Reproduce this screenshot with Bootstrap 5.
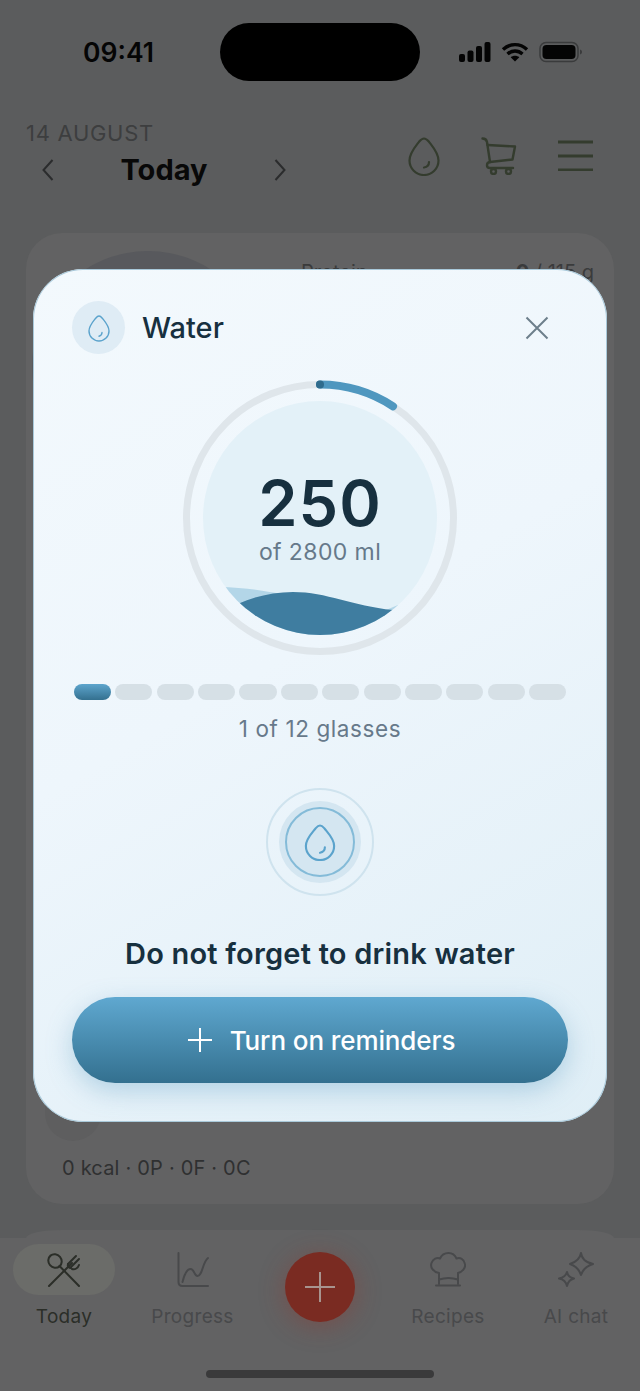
<!DOCTYPE html>
<html lang="en">
<head>
  <meta charset="UTF-8" />
  <meta name="viewport" content="width=device-width, initial-scale=1.0" />
  <title>Water</title>
  <link href="https://cdn.jsdelivr.net/npm/bootstrap@5.3.3/dist/css/bootstrap.min.css" rel="stylesheet">
  <style>
    body { margin: 0; background: #5c5d5e; font-family: Inter, "Liberation Sans", sans-serif; }
    .phone { width: 640px; height: 1391px; overflow: hidden; background: #5b5c5d; }
    .status-row { height: 105px; padding: 23px 57px 0 83px; }
    .clock { font-size: 26.5px; font-weight: 600; color: #050505; width: 137px; line-height: 58px; }
    .island { width: 200px; height: 58px; background: #000; border-radius: 29px; }
    .status-icons { margin-left: 39px; gap: 10px; height: 58px; }
    .head-row { height: 128px; padding: 0 46px 0 26px; }
    .date-label { font-size: 22px; color: #3d3e3f; line-height: 26px; letter-spacing: .7px; margin-top: 15px; }
    .day-row { width: 260px; margin-top: 8px; padding: 0 0 0 16px; }
    .day-name { font-size: 29px; font-weight: 700; color: #080808; line-height: 32px; }
    .head-icons { gap: 41px; margin-top: 32px; }
    .back-card { margin: 0 26px; height: 971px; background: #626263; border-radius: 36px; padding: 18px 20px 24px 36px; }
    .gauge-back { width: 232px; height: 232px; border-radius: 50%; background: #58595d; margin-left: -30px; }
    .macro-row { font-size: 20px; color: #3a3b3c; width: 330px; line-height: 24px; padding-top: 9px; }
    .macro-dot { width: 6px; height: 6px; border-radius: 50%; background: #48494b; margin: 9px 0 0 18px; }
    .macro-name { margin-left: 13px; }
    .meal-blob { width: 56px; height: 40px; border-radius: 0 0 28px 28px; background: #5e5e5f; margin-left: -17px; }
    .kcal-line { font-size: 20px; color: #2f3031; line-height: 24px; letter-spacing: .2px; padding-top: 15px; }
    .next-card { margin: 26px 26px 0; height: 8px; background: #626263; border-radius: 36px 36px 0 0 / 8px 8px 0 0; }
    .tab-bar { height: 153px; background: #626263; padding: 6px 13px 0; }
    .tab-item { width: 102px; font-size: 19px; color: #48494b; line-height: 24px; letter-spacing: .3px; }
    .tab-item.tab-wide { width: 128px; margin-left: 17px; }
    .tab-top { height: 51px; width: 102px; border-radius: 26px; }
    .tab-active .tab-top { background: #6b6c69; }
    .tab-active { color: #2b2e28; }
    .tab-label { margin-top: 10px; }
    .fab-slot { width: 70px; margin: 8px 42px 0 32px; }
    .fab { width: 70px; height: 70px; border-radius: 50%; background: #7a2b22; box-shadow: 0 4px 26px rgba(150,50,40,.4); }
    .item-chat { margin-left: 26px; }
    .home-bar { left: 206px; top: 1370px; width: 228px; height: 8px; border-radius: 4px; background: #3a3a3b; }

    .sheet { position: absolute; left: 33px; top: 269px; width: 574px; height: 853px; border-radius: 50px;
      background: linear-gradient(150deg, #f3f9fd 0%, #eef6fc 45%, #dfeef6 100%); box-shadow: inset 0 0 0 1px #a9c9da; padding: 32px 39px 0; }
    .sheet-head { height: 53px; }
    .drop-badge { width: 53px; height: 53px; border-radius: 50%; background: #dfecf5; }
    .sheet-title { font-size: 29px; font-weight: 500; color: #17303f; margin-left: 17px; line-height: 53px; }
    .close-btn { margin-right: 19px; }
    .ring-box { position: relative; width: 276px; height: 276px; margin: 26px auto 0; }
    .ring-text { position: absolute; inset: 0; text-align: center; padding-top: 88px; }
    .ring-num { font-size: 63px; font-weight: 600; color: #17303f; line-height: 71px; letter-spacing: 1px; }
    .ring-sub { font-size: 23px; color: #66798a; line-height: 26px; letter-spacing: .4px; }
    .glass-row { gap: 4.3px; margin: 28px 2px 0; }
    .glass { flex: 1; height: 16px; border-radius: 8px; background: #d6e0e6; }
    .glass.filled { background: linear-gradient(#5da5cd, #34708f); }
    .glass-count { font-size: 22.500px; color: #67798a; text-align: center; line-height: 26px; margin-top: 16px; letter-spacing: .6px; }
    .add-water { width: 108px; height: 108px; margin: 46px auto 0; border-radius: 50%; border: 2px solid #cfe3ee; }
    .add-mid { width: 82px; height: 82px; border-radius: 50%; background: #d4e6f1; }
    .add-inner { width: 70px; height: 70px; border-radius: 50%; border: 2.500px solid #84bbd8; }
    .nudge { font-size: 29px; font-weight: 600; color: #17303f; text-align: center; line-height: 34px; margin-top: 41px; letter-spacing: .2px; }
    .remind-btn { width: 100%; height: 86px; border: 0; border-radius: 43px; margin-top: 26px; color: #fff; font-size: 26px; font-weight: 500;
      background: linear-gradient(#5fa8d0, #33708f); box-shadow: 0 8px 26px rgba(80,150,190,.35); gap: 18px; letter-spacing: -.1px; padding-left: 15px; }
    .remind-btn:hover { color: #fff; background: linear-gradient(#5fa8d0, #33708f); }
    svg { display: block; }
  </style>
</head>
<body>
<div class="phone position-relative">

  <div class="status-row d-flex">
    <div class="clock">09:41</div>
    <div class="island"></div>
    <div class="status-icons d-flex align-items-center">
      <svg width="32" height="20" viewBox="0 0 32 20" fill="#040404"><rect x="0" y="12" width="6" height="8" rx="2"/><rect x="8.500" y="8.500" width="6" height="11.500" rx="2"/><rect x="17" y="4" width="6" height="16" rx="2"/><rect x="25.500" y="0" width="6" height="20" rx="2"/></svg>
      <svg width="28" height="20" viewBox="0 0 28 20" fill="none" stroke="#040404" stroke-width="3.400"><path d="M2 7.500C9 1 19 1 26 7.500"/><path d="M6.500 12C11 8 17 8 21.500 12"/><path d="M14 19.500l-4.300-4.300c2.400-2 6.200-2 8.600 0z" fill="#040404" stroke="none"/></svg>
      <svg width="44" height="22" viewBox="0 0 44 22"><rect x="1" y="1.500" width="38" height="19" rx="6" fill="none" stroke="#3a3b3c" stroke-width="1.500"/><rect x="3.500" y="4" width="33" height="14" rx="4" fill="#040404"/><path d="M41 8.500c1.500.4 2 1.400 2 2.500s-.5 2.100-2 2.500z" fill="#3a3b3c"/></svg>
    </div>
  </div>

  <div class="head-row d-flex justify-content-between">
    <div>
      <div class="date-label">14 AUGUST</div>
      <div class="day-row d-flex justify-content-between align-items-center">
        <svg width="12" height="24" viewBox="0 0 12 24" fill="none" stroke="#2b2c2d" stroke-width="2"><path d="M10.500 2L1.500 12l9 10"/></svg>
        <div class="day-name">Today</div>
        <svg width="12" height="24" viewBox="0 0 12 24" fill="none" stroke="#2b2c2d" stroke-width="2"><path d="M1.500 2l9 10-9 10"/></svg>
      </div>
    </div>
    <div class="head-icons d-flex align-items-start">
      <svg width="32" height="39" viewBox="0 0 32 39" fill="none" stroke="#343c2e" stroke-width="2.200" stroke-linecap="round"><path d="M16 1.500c2 0 3.500 1.500 5 3.300C25 10 30.500 16 30.500 23.500a14.500 14.500 0 0 1-29 0C1.500 16 7 10 11 4.800 12.500 3 14 1.500 16 1.500z"/><path d="M21 25c0 3-2 5-5 5.500"/></svg>
      <svg width="36" height="38" viewBox="0 0 36 38" fill="none" stroke="#343c2e" stroke-width="2.400" stroke-linecap="round" stroke-linejoin="round"><path d="M1.500 1.500c3 0 4 1 4.500 3.500l3 20"/><path d="M6.500 8l27.500 1.500-2.500 13-22.500 2.500"/><path d="M9 25c-4 .5-4 6 0 6h23"/><circle cx="12.500" cy="34.500" r="2.500"/><circle cx="27.500" cy="34.500" r="2.500"/></svg>
      <svg width="36" height="34" viewBox="0 0 36 34" fill="none" stroke="#343c2e" stroke-width="3"><path d="M0 5h35M0 19h35M0 33h35"/></svg>
    </div>
  </div>

  <div class="back-card d-flex flex-column justify-content-between">
    <div class="d-flex justify-content-between">
      <div class="gauge-back"></div>
      <div class="macro-row d-flex">
        <span class="macro-dot"></span>
        <span class="macro-name">Protein</span>
        <span class="ms-auto"><b>0</b> / 115 g</span>
      </div>
    </div>
    <div>
      <div class="meal-blob"></div>
      <div class="kcal-line">0 kcal · 0P · 0F · 0C</div>
    </div>
  </div>
  <div class="next-card"></div>

  <div class="tab-bar d-flex align-items-start">
    <div class="tab-item tab-active d-flex flex-column align-items-center">
      <div class="tab-top d-flex align-items-center justify-content-center">
        <svg width="36" height="34" viewBox="0 0 36 34" fill="none" stroke="#2b2e28" stroke-width="2" stroke-linecap="round"><ellipse cx="9" cy="8" rx="6.500" ry="7" transform="rotate(-40 9 8)"/><path d="M13.500 13L33 33"/><path d="M3 33L26 10"/><path d="M22 11l8-8M25 14l8-8M26 16c3 1 6-1 7-4"/><path d="M22 11c-1 2 1 4 3 4"/></svg>
      </div>
      <div class="tab-label">Today</div>
    </div>
    <div class="tab-item tab-wide d-flex flex-column align-items-center">
      <div class="tab-top d-flex align-items-center justify-content-center">
        <svg width="32" height="36" viewBox="0 0 32 36" fill="none" stroke="#48494b" stroke-width="2" stroke-linecap="round"><path d="M1.500 1v29c0 2.500 1.500 4 4 4H31"/><path d="M5.500 30c2-8 4.500-13 8-13 4 0 3.500 7 7 7 5 0 5-14 10.500-18"/></svg>
      </div>
      <div class="tab-label">Progress</div>
    </div>
    <div class="fab-slot">
      <div class="fab d-flex align-items-center justify-content-center">
        <svg width="30" height="30" viewBox="0 0 30 30" stroke="#a8948f" stroke-width="2"><path d="M15 0v30M0 15h30"/></svg>
      </div>
    </div>
    <div class="tab-item d-flex flex-column align-items-center">
      <div class="tab-top d-flex align-items-center justify-content-center">
        <svg width="36" height="36" viewBox="0 0 36 36" fill="none" stroke="#48494b" stroke-width="2" stroke-linecap="round" stroke-linejoin="round"><path d="M9 32V21C3 20 0 15 1.500 11 3 7 7 5 10 6.500 12 2 16 1 18.500 1 22 1 25 3 26.500 6.500 30 5 34 7 35 12c1 4-3 8-7 9v11"/><path d="M6 33.500h24M9 27.500c6-2 13-2 19 0"/></svg>
      </div>
      <div class="tab-label">Recipes</div>
    </div>
    <div class="tab-item item-chat d-flex flex-column align-items-center">
      <div class="tab-top d-flex align-items-center justify-content-center">
        <svg width="36" height="36" viewBox="0 0 36 36" fill="none" stroke="#48494b" stroke-width="2" stroke-linejoin="round"><path d="M23 1c1 6 4 9 12 11-7 2-10 5-12 11-2-6-5-9-11-11 6-2 10-5 11-11z"/><path d="M9 20c.6 3.500 2.500 5.500 7 6.500-4 1-6 3-7 7.500-1-4.500-3-6.500-8-7.500 5-1 7-3 8-6.500z"/></svg>
      </div>
      <div class="tab-label">AI chat</div>
    </div>
  </div>
  <div class="home-bar position-absolute"></div>

  <div class="sheet">
    <div class="sheet-head d-flex align-items-center">
      <div class="drop-badge d-flex align-items-center justify-content-center">
        <svg width="24" height="30" viewBox="0 0 24 30" fill="none" stroke="#5ba3cc" stroke-width="1.400" stroke-linecap="round"><path d="M12 3c1.300 0 2.300 1 3.300 2.200C18.300 9 22 13 22 18a10 10 0 0 1-20 0C2 13 5.700 9 8.700 5.200 9.700 4 10.700 3 12 3z"/><path d="M15 19.500c0 2-1.300 3.300-3 3.700"/></svg>
      </div>
      <div class="sheet-title">Water</div>
      <button class="close-btn btn p-0 border-0 ms-auto" aria-label="Close">
        <svg width="24" height="24" viewBox="0 0 24 24" stroke="#6d7f8b" stroke-width="2"><path d="M1.500 1.500l21 21M22.500 1.500l-21 21"/></svg>
      </button>
    </div>

    <div class="ring-box">
      <svg width="276" height="276" viewBox="0 0 276 276">
        <defs><clipPath id="inner"><circle cx="138" cy="138" r="117"/></clipPath></defs>
        <circle cx="138" cy="138" r="133.500" fill="none" stroke="#dfe6eb" stroke-width="7"/>
        <circle cx="138" cy="138" r="117" fill="#e3f1f8"/>
        <g clip-path="url(#inner)">
          <path d="M30 207C60 206 85 212 100 214L180 240 216 225 240 240V280H30Z" fill="#b3d6e8"/>
          <path d="M40 232C60 220 85 212 111 212C145 212 170 226 211 230L260 224V280H40Z" fill="#3f7da0"/>
        </g>
        <path d="M138 4.500A133.500 133.500 0 0 1 211 26.300" fill="none" stroke="#4f97bf" stroke-width="8" stroke-linecap="round"/>
        <circle cx="138" cy="4.500" r="4" fill="#2f6b8c"/>
      </svg>
      <div class="ring-text">
        <div class="ring-num">250</div>
        <div class="ring-sub">of 2800 ml</div>
      </div>
    </div>

    <div class="glass-row d-flex">
      <div class="glass filled"></div><div class="glass"></div><div class="glass"></div><div class="glass"></div><div class="glass"></div><div class="glass"></div><div class="glass"></div><div class="glass"></div><div class="glass"></div><div class="glass"></div><div class="glass"></div><div class="glass"></div>
    </div>
    <div class="glass-count">1 of 12 glasses</div>

    <div class="add-water d-flex align-items-center justify-content-center">
      <div class="add-mid d-flex align-items-center justify-content-center">
        <div class="add-inner d-flex align-items-center justify-content-center">
          <svg width="32" height="37" viewBox="0 0 32 38" fill="none" stroke="#5ba3cc" stroke-width="2.200" stroke-linecap="round"><path d="M16 1.500c1.800 0 3 1.200 4.300 2.700C24 9 30.500 15 30.500 22.500a14.500 14.500 0 0 1-29 0C1.500 15 8 9 11.700 4.200 13 2.700 14.200 1.500 16 1.500z"/><path d="M21 24c0 3-2 5-5 5.500"/></svg>
        </div>
      </div>
    </div>

    <div class="nudge">Do not forget to drink water</div>
    <button class="remind-btn btn d-flex align-items-center justify-content-center">
      <svg width="24" height="24" viewBox="0 0 24 24" stroke="#fff" stroke-width="2"><path d="M12 0v24M0 12h24"/></svg>
      <span>Turn on reminders</span>
    </button>
  </div>
</div>
</body>
</html>
